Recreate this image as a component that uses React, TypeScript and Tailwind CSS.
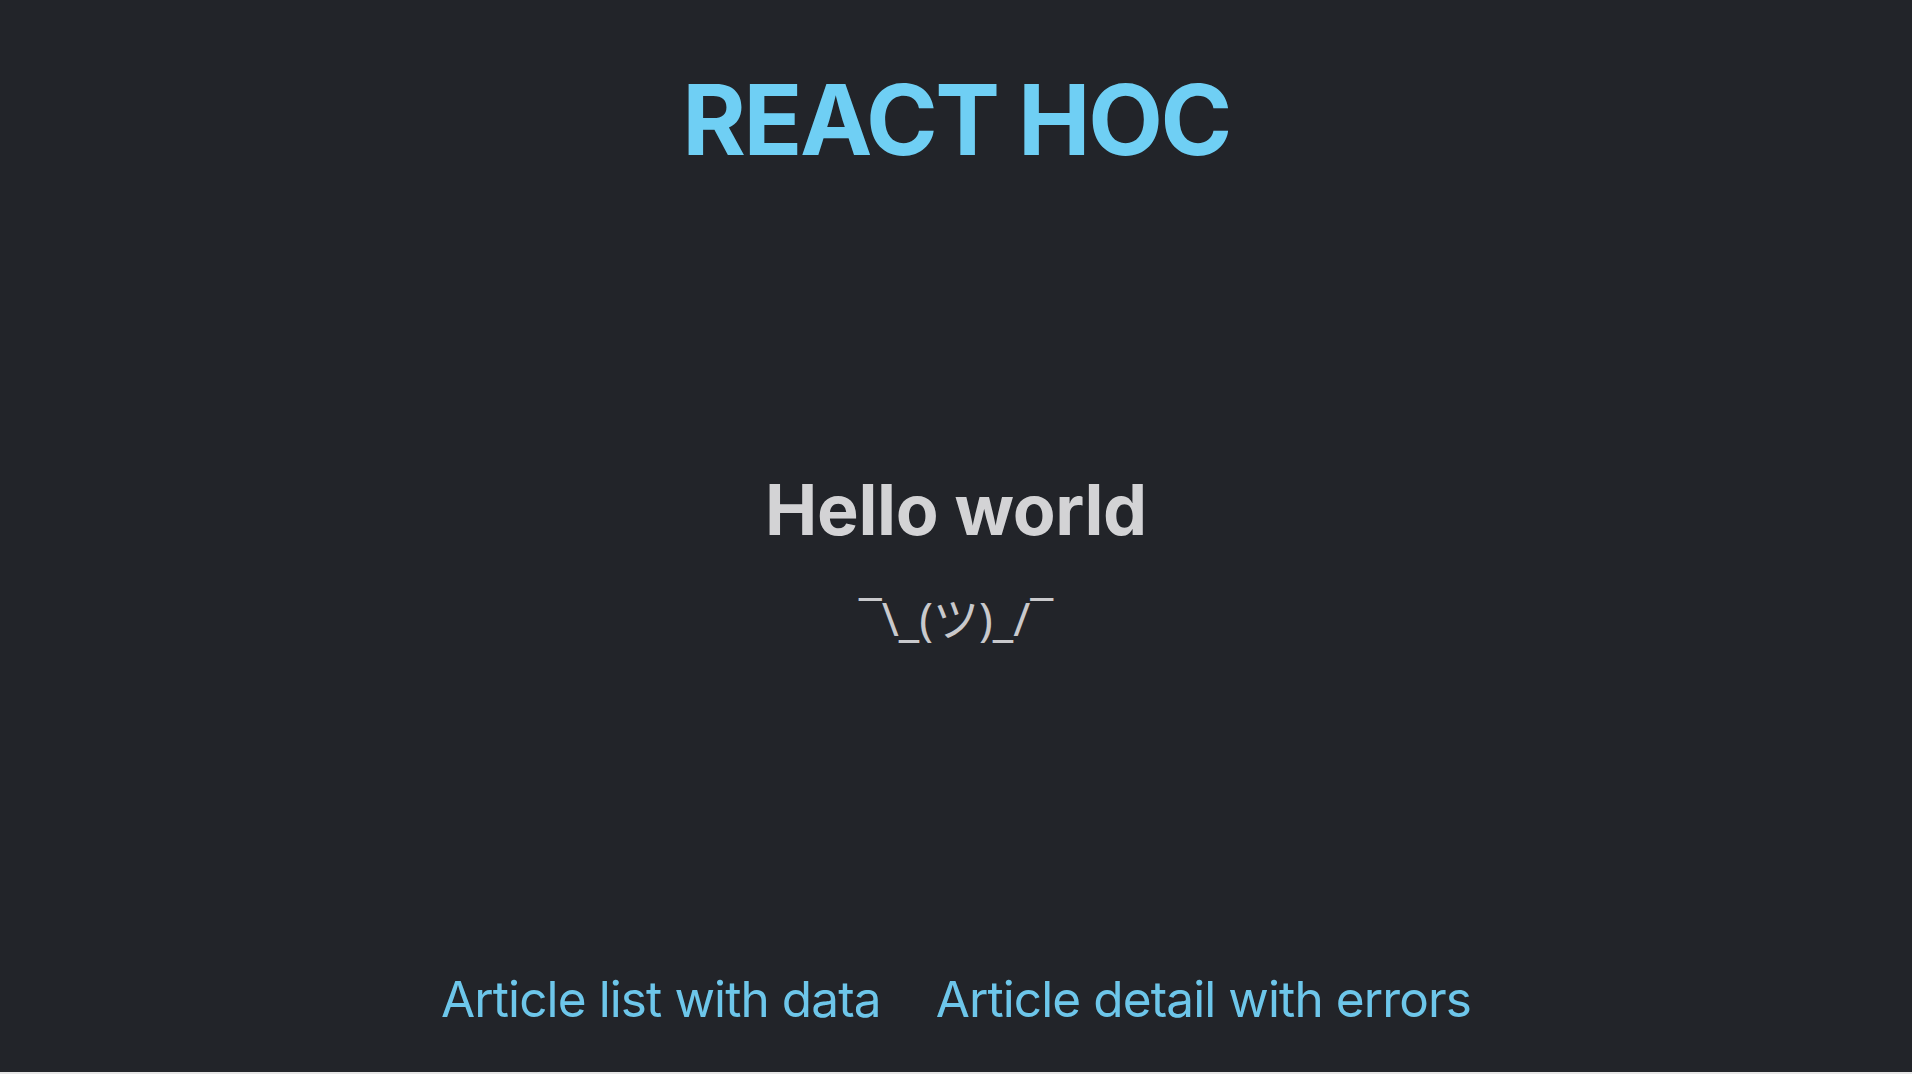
export default function App() {
  return (
    <div className="min-h-screen bg-[#e6e6e6]">
      <div
        className="flex h-[1072px] flex-col items-center bg-[#222429]"
        style={{ fontFamily: 'Inter, "Noto Sans", "Noto Sans CJK JP", sans-serif' }}
      >
        {/* Header */}
        <h1 className="mt-[71px] text-[97px] font-bold leading-none tracking-[-0.025em] text-[#6fcff4]">
          REACT HOC
        </h1>

        {/* Contenu */}
        <main className="flex flex-1 flex-col items-center justify-center pb-[26px]">
          <h2 className="text-[70px] font-bold leading-none tracking-[-0.005em] text-[#d3d3d5]">
            Hello world
          </h2>
          <p
            className="mt-[50px] text-[46px] leading-none text-[#c9c9cc]"
            style={{ fontFamily: '"Noto Sans", "Noto Sans CJK JP", sans-serif' }}
          >
            ¯\_(ツ)_/¯
          </p>
        </main>

        {/* Liens */}
        <nav className="mb-[48px] flex items-center gap-[55px] text-[49.5px] leading-none tracking-[-0.018em] text-[#6dc6ea]">
          <a href="#">Article list with data</a>
          <a href="#">Article detail with errors</a>
        </nav>
      </div>
    </div>
  );
}
